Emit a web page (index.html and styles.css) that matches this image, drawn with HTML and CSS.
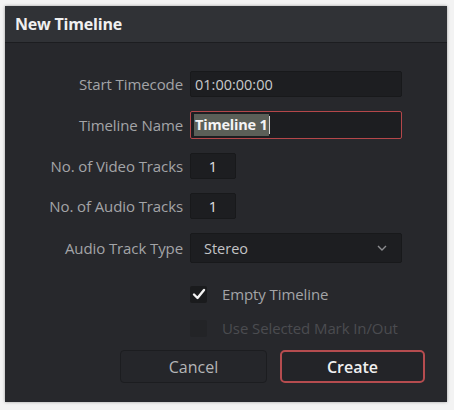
FILE: index.html
```html
<!DOCTYPE html>
<html>
<head>
<meta charset="utf-8">
<link rel="stylesheet" href="styles.css">
</head>
<body>
<div class="dialog">
  <div class="header">New Timeline</div>
  <div class="content">
    <div class="form">
      <div class="label">Start Timecode</div>
      <div class="field wide">01:00:00:00</div>
      <div class="label">Timeline Name</div>
      <div class="field wide focus"><span class="sel">Timeline 1</span><span class="caret"></span></div>
      <div class="label">No. of Video Tracks</div>
      <div class="field num">1</div>
      <div class="label">No. of Audio Tracks</div>
      <div class="field num">1</div>
      <div class="label">Audio Track Type</div>
      <div class="field wide select"><span>Stereo</span>
        <svg class="chev" width="10" height="6" viewBox="0 0 10 6"><path d="M1 1 L5 5 L9 1" fill="none" stroke="#8c8d90" stroke-width="1.4"/></svg>
      </div>
    </div>
    <div class="checks">
      <div class="check-row">
        <span class="box checked"><svg width="14" height="12" viewBox="0 0 14 12"><path d="M2 6.5 L5.5 10 L12 2" fill="none" stroke="#f2f2f2" stroke-width="2.4" stroke-linecap="round" stroke-linejoin="round"/></svg></span>
        <span class="clabel">Empty Timeline</span>
      </div>
      <div class="check-row disabled">
        <span class="box"></span>
        <span class="clabel">Use Selected Mark In/Out</span>
      </div>
    </div>
    <div class="buttons">
      <div class="btn">Cancel</div>
      <div class="btn primary">Create</div>
    </div>
  </div>
</div>
</body>
</html>
```
FILE: styles.css
```css
html, body {
  margin: 0;
  padding: 0;
  background: #f3f3f3;
}
body {
  width: 454px;
  height: 410px;
  padding: 6px 7px 8px 5px;
  box-sizing: border-box;
  font-family: "Open Sans", "Liberation Sans", sans-serif;
}
.dialog {
  width: 442px;
  height: 396px;
  background: #27282c;
  box-shadow: 0 0 3px rgba(0,0,0,0.35);
  display: flex;
  flex-direction: column;
}
.header {
  height: 37px;
  box-sizing: border-box;
  background: #303236;
  border-bottom: 1px solid #1c1d20;
  color: #f0f0f0;
  font-weight: 700;
  font-size: 16px;
  letter-spacing: -0.2px;
  padding-left: 10px;
  display: flex;
  align-items: center;
}
.content {
  padding-top: 28px;
  display: flex;
  flex-direction: column;
}
.form {
  display: grid;
  grid-template-columns: 178px auto;
  column-gap: 7px;
  row-gap: 14px;
  align-items: center;
  justify-items: start;
}
.label {
  justify-self: end;
  color: #a3a4a7;
  font-size: 15px;
  letter-spacing: -0.1px;
}
.field {
  height: 26px;
  box-sizing: border-box;
  background: #1d1e21;
  border: 1px solid #18191b;
  border-radius: 2px;
  color: #c9cacc;
  font-size: 14.5px;
  display: flex;
  align-items: center;
  padding-left: 4px;
}
.wide { width: 212px; }
.num {
  width: 46px;
  justify-content: center;
  padding-left: 0;
  color: #e2e2e4;
}
.focus {
  height: 28px;
  border: 1.5px solid #b4474a;
  padding-left: 3px;
}
.sel {
  background: #5b5f58;
  color: #f4f4f4;
  font-weight: 700;
  font-size: 14.5px;
  letter-spacing: -0.2px;
  line-height: 22px;
  padding: 0 1px;
}
.caret {
  width: 1px;
  height: 18px;
  background: #d8d8d8;
}
.select {
  height: 30px;
  justify-content: space-between;
  padding: 0 14px 0 13px;
  color: #c3c4c6;
}
.checks {
  margin-left: 185px;
  margin-top: 22px;
  display: flex;
  flex-direction: column;
  gap: 16px;
}
.check-row {
  display: flex;
  align-items: center;
  gap: 15px;
  height: 18px;
}
.box {
  width: 17px;
  height: 17px;
  box-sizing: border-box;
  background: #1a1b1d;
  border-radius: 2px;
  display: flex;
  align-items: center;
  justify-content: center;
}
.clabel {
  color: #a3a4a7;
  font-size: 15px;
  letter-spacing: -0.1px;
}
.disabled .box { background: #232427; }
.disabled .clabel { color: #4b4c50; }
.buttons {
  margin-top: 13px;
  margin-left: 115px;
  display: flex;
  gap: 13px;
}
.btn {
  width: 147px;
  height: 33px;
  box-sizing: border-box;
  border: 1px solid #1c1d20;
  border-radius: 4px;
  background: #25262a;
  color: #b4b5b7;
  font-size: 16px;
  display: flex;
  align-items: center;
  justify-content: center;
}
.primary {
  width: 145px;
  border: 2px solid #b54c4f;
  border-radius: 5px;
  color: #f0f0f0;
  font-weight: 600;
  background: #232428;
}
```
